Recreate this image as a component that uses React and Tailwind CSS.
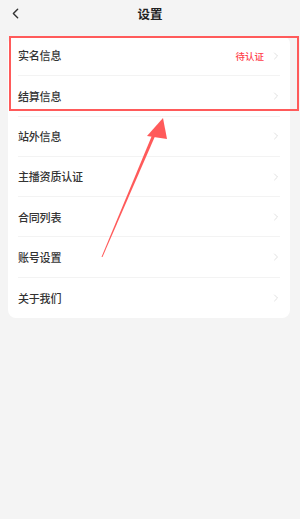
import { ChevronLeft, ChevronRight } from 'lucide-react';

const items = [
  { label: '实名信息', status: '待认证' },
  { label: '结算信息' },
  { label: '站外信息' },
  { label: '主播资质认证' },
  { label: '合同列表' },
  { label: '账号设置' },
  { label: '关于我们' },
];

export default function App() {
  return (
    <div
      className="relative w-[300px] h-[519px] bg-[#f4f4f4] overflow-hidden"
      style={{ fontFamily: '"Noto Sans CJK SC", "Noto Sans", sans-serif' }}
    >
      {/* header */}
      <div className="relative h-[28px] flex items-center justify-center">
        <ChevronLeft className="absolute left-[7px] top-[5px] w-[17px] h-[17px] text-[#333]" strokeWidth={2} />
        <span className="text-[12.5px] font-bold text-[#222]">设置</span>
      </div>

      {/* list card */}
      <div className="mx-[8px] mt-[8px] w-[282px] bg-white rounded-[8px] overflow-hidden">
        {items.map((item, i) => (
          <div key={item.label} className="px-[10px]">
            <div
              className={
                'h-[40.3px] flex items-center ' +
                (i < items.length - 1 ? 'border-b border-[#f3f3f3]' : '')
              }
            >
              <span className="flex-1 text-[11px] font-medium text-[#333] tracking-[-0.2px]">{item.label}</span>
              {item.status && (
                <span className="text-[9.5px] font-medium text-[#ff3d4a] mr-[6px]">{item.status}</span>
              )}
              <ChevronRight className="w-[12px] h-[12px] text-[#cfcfcf] -mr-[2px]" strokeWidth={1.3} />
            </div>
          </div>
        ))}
      </div>

      {/* annotation: red box */}
      <div className="absolute left-[9px] top-[36px] w-[290px] h-[75px] border-2 border-[#ff5a5a]" />

      {/* annotation: arrow */}
      <svg className="absolute left-0 top-0" width="300" height="519" viewBox="0 0 300 519">
        <polygon points="101.5,257 102.5,257 156,134 153,133" fill="#ff5a5a" />
        <polygon points="163,118 147,136 167,139" fill="#ff5a5a" />
      </svg>
    </div>
  );
}
